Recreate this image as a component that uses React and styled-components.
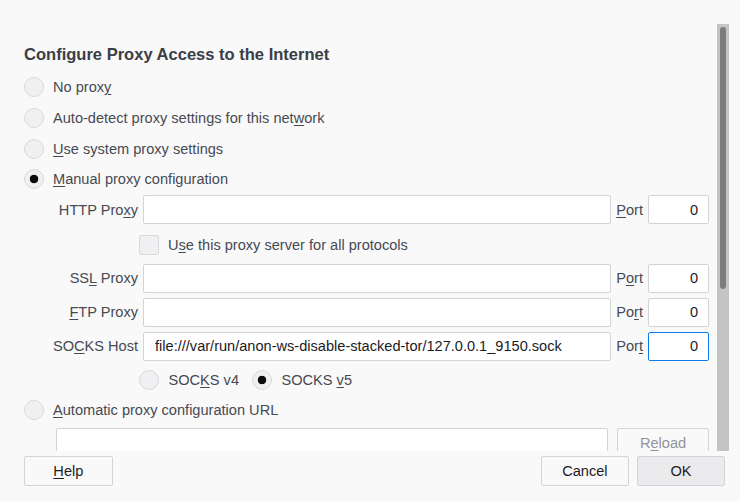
import styled, { createGlobalStyle } from 'styled-components';

const GlobalStyle = createGlobalStyle`
  html, body {
    margin: 0;
    padding: 0;
    background: #f9f9fa;
  }

  body {
    font-family: "Liberation Sans", Arial, sans-serif;
  }
`;

const Dialog = styled.div`
  width: 740px;
  height: 502px;
  display: flex;
  flex-direction: column;
  background: #f9f9fa;
  color: #474a52;
  font-size: 14.58px;
  overflow: hidden;
`;

const Body = styled.div`
  display: flex;
  height: 427px;
  margin-top: 24px;
  padding: 0 11px 0 24px;
`;

const Scroller = styled.div`
  flex: 1;
  overflow: hidden;
  padding-right: 8px;
`;

const Track = styled.div`
  width: 12px;
  background: #c3c4c3;
  display: flex;
  justify-content: center;
  padding-top: 3px;
  box-sizing: border-box;
`;

const Thumb = styled.div`
  width: 6px;
  height: 262px;
  background: #7a7d7f;
  border-radius: 3px;
`;

const Title = styled.h1`
  margin: 21px 0 7px;
  font-size: 16.55px;
  line-height: 20px;
  font-weight: bold;
  color: #3a3e46;
`;

const Option = styled.label`
  display: flex;
  align-items: center;
  gap: 9px;
  height: ${(p) => p.$height || '30.7px'};
`;

const Choice = styled.label`
  display: flex;
  align-items: center;
  gap: 9.5px;
`;

const Radio = styled.input.attrs({ type: 'radio' })`
  appearance: none;
  margin: 0;
  width: 20px;
  height: 20px;
  flex: none;
  border-radius: 50%;
  border: 1px solid #d9d9dc;
  background: #f0f0f2;
  box-sizing: border-box;

  &:checked {
    background: radial-gradient(circle, #0c0c0d 0 4px, transparent 4.6px), #f0f0f2;
  }
`;

const Checkbox = styled.input.attrs({ type: 'checkbox' })`
  appearance: none;
  margin: 0;
  width: 20px;
  height: 20px;
  flex: none;
  border-radius: 2px;
  border: 1px solid #d9d9dc;
  background: #f0f0f2;
  box-sizing: border-box;
`;

const Key = styled.u`
  text-underline-offset: 2px;
`;

const FieldRow = styled.div`
  display: grid;
  grid-template-columns: 114px 468px auto 61px;
  column-gap: 5px;
  align-items: center;
  margin-top: ${(p) => p.$top || 0}px;
`;

const FieldLabel = styled.label`
  text-align: right;
  white-space: nowrap;
`;

const TextField = styled.input`
  box-sizing: border-box;
  height: 29px;
  width: ${(p) => (p.$width ? `${p.$width}px` : '100%')};
  margin: 0;
  padding: 0 ${(p) => (p.$number ? '10px' : '11px')};
  border: 1px solid ${(p) => (p.$focused ? '#0a7cf0' : '#d4d4d8')};
  border-radius: 2px;
  background: #fff;
  font-family: inherit;
  font-size: 14.58px;
  color: #1b1b1f;
  text-align: ${(p) => (p.$number ? 'right' : 'left')};
  outline: none;
`;

const CheckRow = styled.label`
  display: flex;
  align-items: center;
  gap: 9px;
  height: 20px;
  margin: 10.5px 0 9px 115px;
`;

const Versions = styled.div`
  display: flex;
  align-items: center;
  gap: 13px;
  height: 30px;
  margin-top: 4px;
  padding-left: 115px;
`;

const UrlRow = styled.div`
  display: flex;
  gap: 9px;
  margin: 3.5px 0 0 32px;
`;

const Button = styled.button`
  box-sizing: border-box;
  width: ${(p) => p.$width || 87.5}px;
  height: 29.5px;
  margin: 0;
  padding: 0;
  border: 1px solid #d4d4d8;
  border-radius: 2px;
  background: ${(p) => (p.$primary ? '#ebebed' : '#f9f9fa')};
  font-family: inherit;
  font-size: 14.58px;
  color: ${(p) => (p.disabled ? '#939399' : '#1c1c1e')};
  flex: none;
`;

const Footer = styled.div`
  display: flex;
  align-items: flex-start;
  gap: 8.6px;
  padding: 5.3px 15.3px 0 24px;
`;

const Spacer = styled.div`
  flex: 1;
`;

const fields = [
  { label: <>HTTP Pro<Key>x</Key>y</>, port: <><Key>P</Key>ort</>, value: '' },
  { label: <>SS<Key>L</Key> Proxy</>, port: <>P<Key>o</Key>rt</>, value: '' },
  { label: <><Key>F</Key>TP Proxy</>, port: <>Po<Key>r</Key>t</>, value: '' },
  {
    label: <>SO<Key>C</Key>KS Host</>,
    port: <>Por<Key>t</Key></>,
    value: 'file:///var/run/anon-ws-disable-stacked-tor/127.0.0.1_9150.sock',
    focused: true,
  },
];

const Field = ({ field, top }) => (
  <FieldRow $top={top}>
    <FieldLabel>{field.label}</FieldLabel>
    <TextField readOnly value={field.value} />
    <FieldLabel>{field.port}</FieldLabel>
    <TextField readOnly $number $focused={field.focused} value="0" />
  </FieldRow>
);

export default function App() {
  return (
    <>
      <GlobalStyle />
      <Dialog>
        <Body>
          <Scroller>
            <Title>Configure Proxy Access to the Internet</Title>

            <Option>
              <Radio name="mode" />
              <span>No prox<Key>y</Key></span>
            </Option>
            <Option>
              <Radio name="mode" />
              <span>Auto-detect proxy settings for this net<Key>w</Key>ork</span>
            </Option>
            <Option>
              <Radio name="mode" />
              <span><Key>U</Key>se system proxy settings</span>
            </Option>
            <Option>
              <Radio name="mode" defaultChecked />
              <span><Key>M</Key>anual proxy configuration</span>
            </Option>

            <Field field={fields[0]} top={0.5} />
            <CheckRow>
              <Checkbox />
              <span>U<Key>s</Key>e this proxy server for all protocols</span>
            </CheckRow>
            <Field field={fields[1]} />
            <Field field={fields[2]} top={5} />
            <Field field={fields[3]} top={5} />

            <Versions>
              <Choice>
                <Radio name="socks" />
                <span>SOC<Key>K</Key>S v4</span>
              </Choice>
              <Choice>
                <Radio name="socks" defaultChecked />
                <span>SOCKS <Key>v</Key>5</span>
              </Choice>
            </Versions>

            <Option $height="30px">
              <Radio name="mode" />
              <span><Key>A</Key>utomatic proxy configuration URL</span>
            </Option>
            <UrlRow>
              <TextField readOnly $width={552} value="" />
              <Button disabled $width={92}>R<Key>e</Key>load</Button>
            </UrlRow>
          </Scroller>
          <Track>
            <Thumb />
          </Track>
        </Body>

        <Footer>
          <Button $width={88.7}><Key>H</Key>elp</Button>
          <Spacer />
          <Button>Cancel</Button>
          <Button $primary>OK</Button>
        </Footer>
      </Dialog>
    </>
  );
}
